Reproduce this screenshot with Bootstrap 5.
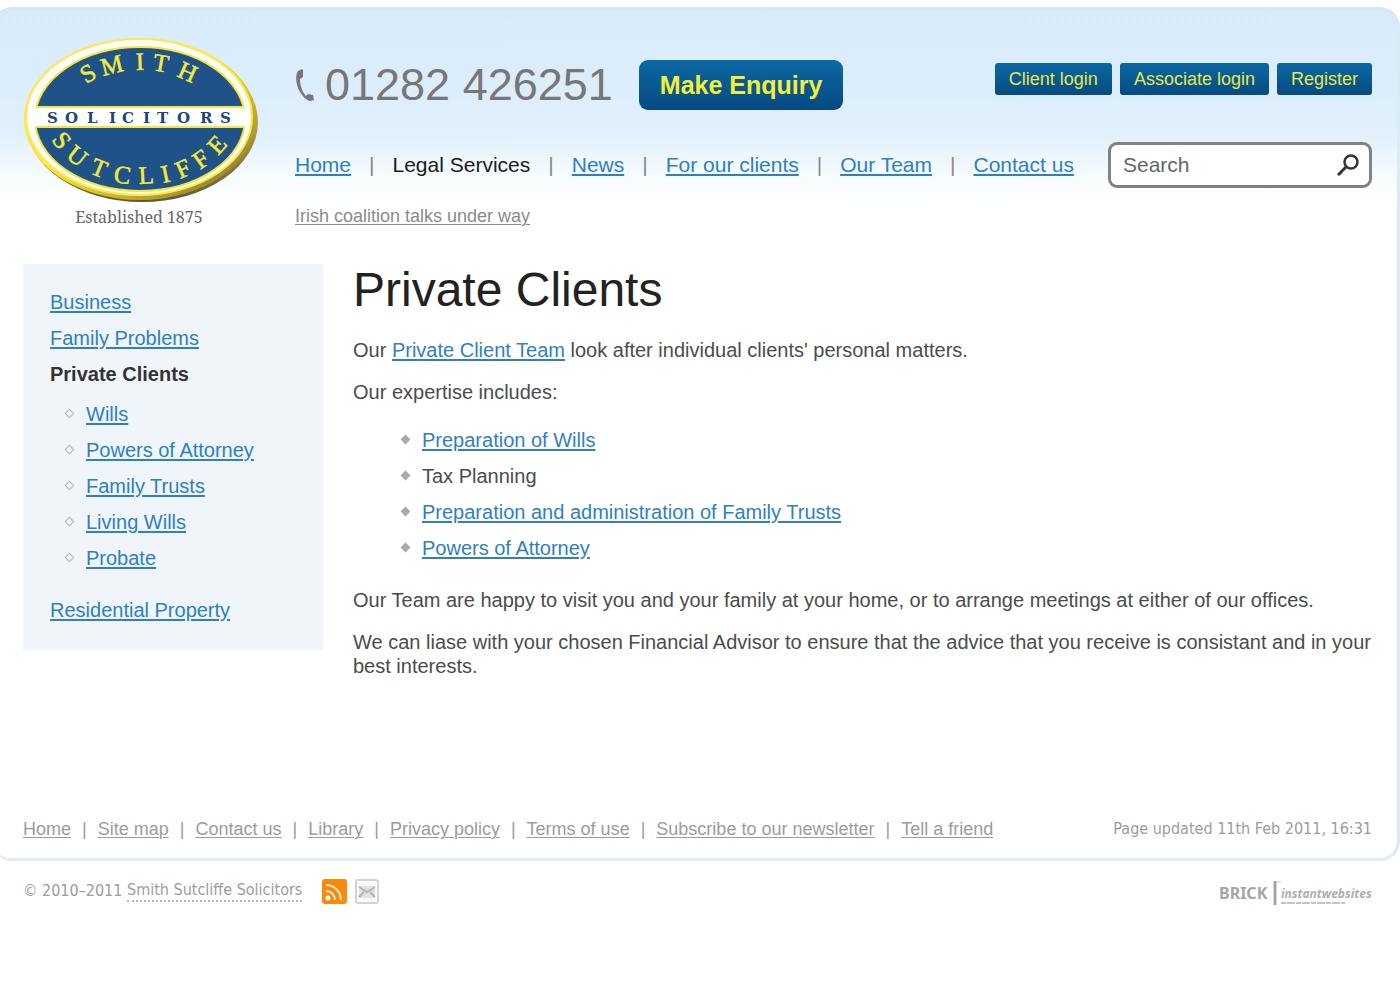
<!DOCTYPE html>
<html lang="en">
<head>
<meta charset="utf-8">
<meta name="viewport" content="width=device-width, initial-scale=1">
<title>Private Clients - Smith Sutcliffe Solicitors</title>
<link href="https://cdn.jsdelivr.net/npm/bootstrap@5.3.0/dist/css/bootstrap.min.css" rel="stylesheet">
<style>
  body { font-family: "Liberation Sans", Arial, sans-serif; font-size: 20px; line-height: 24px; color: #4c4c4c; background: #fff; overflow-x: hidden; }
  a { color: #2f7fc3; text-underline-offset: 2px; text-decoration-thickness: 2px; }
  .page-panel { margin: 7px 0 0 -8px; padding: 0 25px 17px 31px; border: 3px solid #d9ebf5; border-left-width: 0; border-top-color: #d3e8f5; border-bottom-color: #e2edf3; border-radius: 20px; background: linear-gradient(#d8ebfa 0, #dceefb 80px, #e2f1fb 128px, #f6fbfe 165px, #fff 195px); }
  .brand-col { width: 272px; padding-top: 25px; }
  .brand-col svg { display: block; }
  .established { width: 232px; font: 16px/24px "Noto Serif", "DejaVu Serif Condensed", "DejaVu Serif", serif; color: #666; }
  .head-col { padding-top: 50px; }
  .phone { font-size: 45px; line-height: 50px; color: #777; }
  .btn-firm { --bs-btn-color: #f4ee3a; --bs-btn-hover-color: #fff; border: 0; background: linear-gradient(#0c68a3, #064a80); }
  .btn-enquiry { font-size: 25px; line-height: 30px; font-weight: 700; padding: 10px 21px; border-radius: 9px; margin-left: 26px; }
  .login-row { padding-top: 3px; }
  .btn-login { font-size: 18px; line-height: 24px; padding: 4px 14px; border-radius: 3px; color: #e4e84a; }
  .head-links { margin-top: 32px; }
  .main-nav { font-size: 21px; column-gap: 18px; color: #888; }
  .main-nav .here { color: #1c1c1c; }
  .search-box { width: 264px; height: 46px; border: 3px solid #808285; border-radius: 9px; background: #fff; padding: 0 10px 0 12px; }
  .search-box input { font-size: 21px; line-height: 24px; color: #555; min-width: 0; }
  .search-box input::placeholder { color: #666; opacity: 1; }
  .ticker { font-size: 18px; }
  .quiet, .quiet a { color: #9c9c9c; }
  .quiet a, .ticker a { text-decoration-thickness: 1px; }
  .ticker a { color: #8b8b8b; }
  .page-body { margin-top: 35px; }
  .side-nav { width: 300px; padding: 20px 27px 22px; background: #f0f5f9; line-height: 36px; }
  .side-nav strong { color: #333; }
  .side-nav ul ul { padding: 4px 0 16px 36px; }
  .dot-list { line-height: 36px; padding-left: 69px; margin-bottom: 22px; }
  .dot-list li, .side-nav li li { position: relative; }
  .dot-list li::before, .side-nav li li::before { content: ""; position: absolute; left: -20px; top: 14px; width: 7px; height: 7px; transform: rotate(45deg); background: #a9a9a9; }
  .side-nav li li::before { background: none; border: 1px solid #b5b5b5; }
  h1 { font-size: 48px; line-height: 52px; font-weight: 400; color: #222; margin-bottom: 22px; }
  .copy-col { margin-left: 30px; }
  .copy-col p { margin-bottom: 18px; }
  .panel-foot { font-size: 18px; margin-top: 121px; }
  .foot-links { column-gap: 11px; }
  .updated, .legal-line { font: 16px/24px "DejaVu Sans Condensed", "DejaVu Sans", sans-serif; }
  .legal-line { padding: 15px 28px 0 23px; }
  .legal-line .firm { text-decoration: none; border-bottom: 2px dotted #b5b5b5; line-height: 20px; margin-right: 20px; }
</style>
<script src="https://cdn.jsdelivr.net/npm/bootstrap@5.3.0/dist/js/bootstrap.bundle.min.js"></script>
</head>
<body>
<div class="page-panel">
  <header class="d-flex">
    <div class="brand-col flex-shrink-0">
      <svg width="236" height="170" viewBox="23 35 236 170" role="img" aria-label="Smith Sutcliffe Solicitors">
        <defs>
          <linearGradient id="rim" x1="0" y1="0" x2="1" y2="1">
            <stop offset="0" stop-color="#f4e27a"/><stop offset=".45" stop-color="#ffe92e"/><stop offset=".7" stop-color="#c9b428"/><stop offset="1" stop-color="#6f6430"/>
          </linearGradient>
          <linearGradient id="edge" x1="0" y1="0" x2="0" y2="1">
            <stop offset="0" stop-color="#efd95a"/><stop offset=".5" stop-color="#b3a14a"/><stop offset="1" stop-color="#5f5836"/>
          </linearGradient>
        </defs>
        <ellipse cx="142" cy="122" rx="116" ry="80" fill="url(#edge)"/>
        <ellipse cx="140" cy="119" rx="116" ry="81" fill="url(#rim)"/>
        <ellipse cx="139" cy="117" rx="113" ry="78" fill="#fdfcfa" stroke="#ffe94a" stroke-width="2"/>
        <ellipse cx="140" cy="119" rx="105" ry="72" fill="#1f5288" stroke="#f7e635" stroke-width="2"/>
        <path d="M31 107H248V127H31Z" fill="#fff"/>
        <path d="M36 107H244M36 127H244" stroke="#f7e635" stroke-width="2"/>
        <g font-family="'Liberation Serif', serif">
          <text font-size="25" fill="#f7ea38" stroke="#f7ea38" stroke-width=".5" x="86 103 136 152 176" y="84 76 70 70 76" rotate="-30 -14 -2 10 24">SMITH</text>
          <text font-size="15" font-weight="700" font-family="'DejaVu Serif', serif" fill="#1d4680" x="47 65 87 109 122 143 157 177 200 220" y="123">SOLICITORS</text>
          <text font-size="25" fill="#f7ea38" stroke="#f7ea38" stroke-width=".5" x="51 65 89 113 139 163 180 200 218" y="140 157 173 182 184 183 179 170 156" rotate="52 38 22 8 -3 -12 -24 -35 -48">SUTCLIFFE</text>
        </g>
      </svg>
      <div class="established text-center">Established 1875</div>
    </div>
    <div class="head-col flex-grow-1">
      <div class="d-flex align-items-start justify-content-between">
        <div class="d-flex align-items-center">
          <svg class="me-2" width="22" height="34" viewBox="0 0 22 34" aria-hidden="true"><path d="M7 1 3 3C0 7 1 16 4 22 7 28 11 32 15 33L19 32 18 27 13 26 11 28C7 24 5 17 5 11L8 9 8 2Z" fill="#777"/></svg>
          <span class="phone">01282 426251</span>
          <button type="button" class="btn btn-firm btn-enquiry">Make Enquiry</button>
        </div>
        <div class="login-row d-flex gap-2">
          <button type="button" class="btn btn-firm btn-login">Client login</button>
          <button type="button" class="btn btn-firm btn-login">Associate login</button>
          <button type="button" class="btn btn-firm btn-login">Register</button>
        </div>
      </div>
      <div class="head-links d-flex align-items-center justify-content-between">
        <nav class="main-nav d-flex" aria-label="Main">
          <a href="#">Home</a><span>|</span><span class="here">Legal Services</span><span>|</span><a href="#">News</a><span>|</span><a href="#">For our clients</a><span>|</span><a href="#">Our Team</a><span>|</span><a href="#">Contact us</a>
        </nav>
        <form class="search-box d-flex align-items-center" role="search">
          <input class="border-0 p-0 flex-grow-1 bg-transparent" type="text" placeholder="Search" aria-label="Search">
          <button type="submit" class="btn p-0 border-0 d-flex" aria-label="Go"><svg width="22" height="22" viewBox="0 0 22 22" fill="none" stroke="#333"><circle cx="14" cy="8" r="6.500" stroke-width="2.500"/><path d="M9 13 1 21" stroke-width="3"/></svg></button>
        </form>
      </div>
      <div class="ticker mt-3"><a href="#">Irish coalition talks under way</a></div>
    </div>
  </header>
  <div class="page-body d-flex align-items-start">
    <nav class="side-nav flex-shrink-0" aria-label="Legal services">
      <ul class="list-unstyled mb-0">
        <li><a href="#">Business</a></li>
        <li><a href="#">Family Problems</a></li>
        <li><strong>Private Clients</strong>
          <ul class="list-unstyled">
            <li><a href="#">Wills</a></li>
            <li><a href="#">Powers of Attorney</a></li>
            <li><a href="#">Family Trusts</a></li>
            <li><a href="#">Living Wills</a></li>
            <li><a href="#">Probate</a></li>
          </ul>
        </li>
        <li><a href="#">Residential Property</a></li>
      </ul>
    </nav>
    <main class="copy-col flex-grow-1">
      <h1>Private Clients</h1>
      <p>Our <a href="#">Private Client Team</a> look after individual clients' personal matters.</p>
      <p>Our expertise includes:</p>
      <ul class="dot-list list-unstyled">
        <li><a href="#">Preparation of Wills</a></li>
        <li>Tax Planning</li>
        <li><a href="#">Preparation and administration of Family Trusts</a></li>
        <li><a href="#">Powers of Attorney</a></li>
      </ul>
      <p>Our Team are happy to visit you and your family at your home, or to arrange meetings at either of our offices.</p>
      <p>We can liase with your chosen Financial Advisor to ensure that the advice that you receive is consistant and in your best interests.</p>
    </main>
  </div>
  <div class="panel-foot quiet d-flex justify-content-between">
    <nav class="foot-links d-flex" aria-label="Footer">
      <a href="#">Home</a><span>|</span><a href="#">Site map</a><span>|</span><a href="#">Contact us</a><span>|</span><a href="#">Library</a><span>|</span><a href="#">Privacy policy</a><span>|</span><a href="#">Terms of use</a><span>|</span><a href="#">Subscribe to our newsletter</a><span>|</span><a href="#">Tell a friend</a>
    </nav>
    <span class="updated">Page updated 11th Feb 2011, 16:31</span>
  </div>
</div>
<footer class="legal-line quiet d-flex align-items-center justify-content-between">
  <div class="d-flex align-items-center">
    <span>© 2010–2011&nbsp;</span><a class="firm" href="#">Smith Sutcliffe Solicitors</a>
    <a class="d-flex" href="#" aria-label="RSS feed"><svg width="25" height="25" viewBox="0 0 25 25"><rect width="25" height="25" rx="3" fill="#fb8a0c"/><circle cx="6" cy="19" r="2.500" fill="#fff"/><path d="M4 12a9 9 0 0 1 9 9M4 6a15 15 0 0 1 15 15" fill="none" stroke="#ffeeda" stroke-width="2"/></svg></a>
    <a class="d-flex ms-2" href="#" aria-label="Email"><svg width="24" height="25" viewBox="0 0 24 25" fill="none"><rect x="1" y="1" width="22" height="23" rx="2" fill="#fafafa" stroke="#d4d4d4" stroke-width="2"/><path d="M4 7H20V19H4Z" fill="#e2e2e2"/><path d="M4 8 12 13 20 8M4 18 9 13M20 18 15 13" stroke="#b4b4b4" stroke-width="2"/></svg></a>
  </div>
  <svg class="mt-1" width="153" height="26" viewBox="0 0 153 26" role="img" aria-label="Brick instant websites">
    <text x="0" y="19" font-family="'Noto Sans', sans-serif" font-size="16" font-weight="700" fill="#a5a5a5">BRICK</text>
    <path d="M56 1V25" stroke="#a5a5a5" stroke-width="3"/><path d="M58 2H62" stroke="#c8c8c8"/>
    <text x="62" y="18" font-family="'Noto Sans', sans-serif" font-size="12" font-style="italic" font-weight="700" fill="#b0b0b0">instantwebsites</text>
    <path d="M62 23H126" stroke="#c4c4c4" stroke-width="2" stroke-dasharray="5 1 8 1"/>
  </svg>
</footer>
</body>
</html>
